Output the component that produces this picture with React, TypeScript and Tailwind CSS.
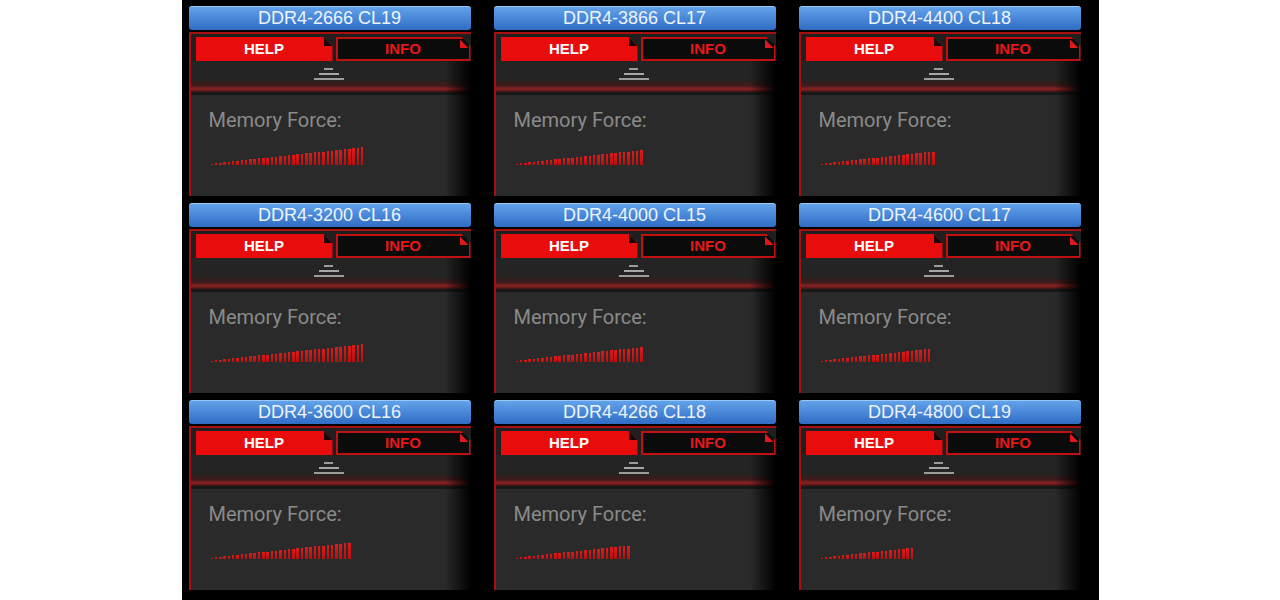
import React from "react";

type CardProps = { label: string; bars: number };

const cards: CardProps[] = [
  { label: "DDR4-2666 CL19", bars: 36 },
  { label: "DDR4-3866 CL17", bars: 30 },
  { label: "DDR4-4400 CL18", bars: 27 },
  { label: "DDR4-3200 CL16", bars: 36 },
  { label: "DDR4-4000 CL15", bars: 30 },
  { label: "DDR4-4600 CL17", bars: 26 },
  { label: "DDR4-3600 CL16", bars: 33 },
  { label: "DDR4-4266 CL18", bars: 27 },
  { label: "DDR4-4800 CL19", bars: 22 },
];

const ForceBars: React.FC<{ count: number }> = ({ count }) => (
  <div className="flex h-[18px] items-end gap-[1.8px]">
    {Array.from({ length: count }).map((_, i) => (
      <div
        key={i}
        className="w-[2.5px] bg-gradient-to-b from-[#e01a1a] to-[#b80f0f]"
        style={{ height: `${1.5 + i * 0.46}px` }}
      />
    ))}
  </div>
);

const Tab: React.FC<{ active?: boolean; children: React.ReactNode; className?: string }> = ({
  active,
  children,
  className,
}) => (
  <div
    className={
      "relative flex h-[24px] items-center justify-center font-['Liberation_Sans',Arial,sans-serif] text-[15px] font-bold [clip-path:polygon(0_0,calc(100%-9px)_0,100%_9px,100%_100%,0_100%)] " +
      (active
        ? "bg-[#e80c0c] text-white "
        : "border-2 border-[#c01010] bg-[#0b0b0b] text-[#e81818] ") +
      (className ?? "")
    }
  >
    {children}
    <div
      className={
        "absolute right-0 top-0 h-[9px] w-[9px] [clip-path:polygon(0_0,0_100%,100%_100%)] " +
        (active ? "bg-[#1a0404]" : "bg-[#e01818]")
      }
    />
  </div>
);

const MemoryCard: React.FC<CardProps> = ({ label, bars }) => (
  <div className="relative flex h-[190px] flex-col">
    <div className="h-[24px] rounded-[3px] border-t border-[#9cc8f5] bg-gradient-to-b from-[#62a2ea] to-[#2f6cc4] text-center font-['Liberation_Sans',Arial,sans-serif] text-[18px] leading-[23px] text-[#eef4ff]">
      {label}
    </div>
    <div className="mt-[2px] flex flex-1 flex-col border-l-2 border-t-2 border-[#a80f0f]">
      <div className="flex flex-col bg-[#1f1f1f]">
        <div className="flex gap-[3px] pl-[5px] pt-[3px]">
          <Tab active className="w-[137px]">
            HELP
          </Tab>
          <Tab className="flex-1">INFO</Tab>
        </div>
        <div className="flex h-[19px] flex-col items-center justify-end gap-[3px] bg-[#242424] pr-[4px]">
          <div className="h-[2px] w-[9px] bg-[#9c9c9c]" />
          <div className="h-[2px] w-[20px] bg-[#a6a6a6]" />
          <div className="h-[2px] w-[30px] bg-[#9c9c9c]" />
        </div>
        <div className="h-[12px] bg-[linear-gradient(to_bottom,#262222_0%,#3e1b1b_45%,#8c2222_75%,#3a1414_100%)]" />
        <div className="h-[3px] bg-[#181818]" />
      </div>
      <div className="flex flex-1 flex-col bg-[#2a2a2a] pl-[18px] pt-[13px]">
        <div className="font-['Roboto',sans-serif] text-[20px] leading-[24px] text-[#8a8a8a]">
          Memory Force:
        </div>
        <div className="mt-[15px] pl-[2px]">
          <ForceBars count={bars} />
        </div>
      </div>
    </div>
    <div className="pointer-events-none absolute bottom-0 right-0 top-[55px] w-[26px] bg-gradient-to-r from-transparent to-black" />
  </div>
);

export default function App() {
  return (
    <div className="flex h-[600px] w-full justify-center bg-white">
      <div className="grid h-[600px] w-[917px] grid-cols-[282px_282px_282px] content-start gap-x-[23px] gap-y-[7px] bg-black pl-[7px] pr-[19px] pt-[6px]">
        {cards.map((c) => (
          <MemoryCard key={c.label} {...c} />
        ))}
      </div>
    </div>
  );
}
